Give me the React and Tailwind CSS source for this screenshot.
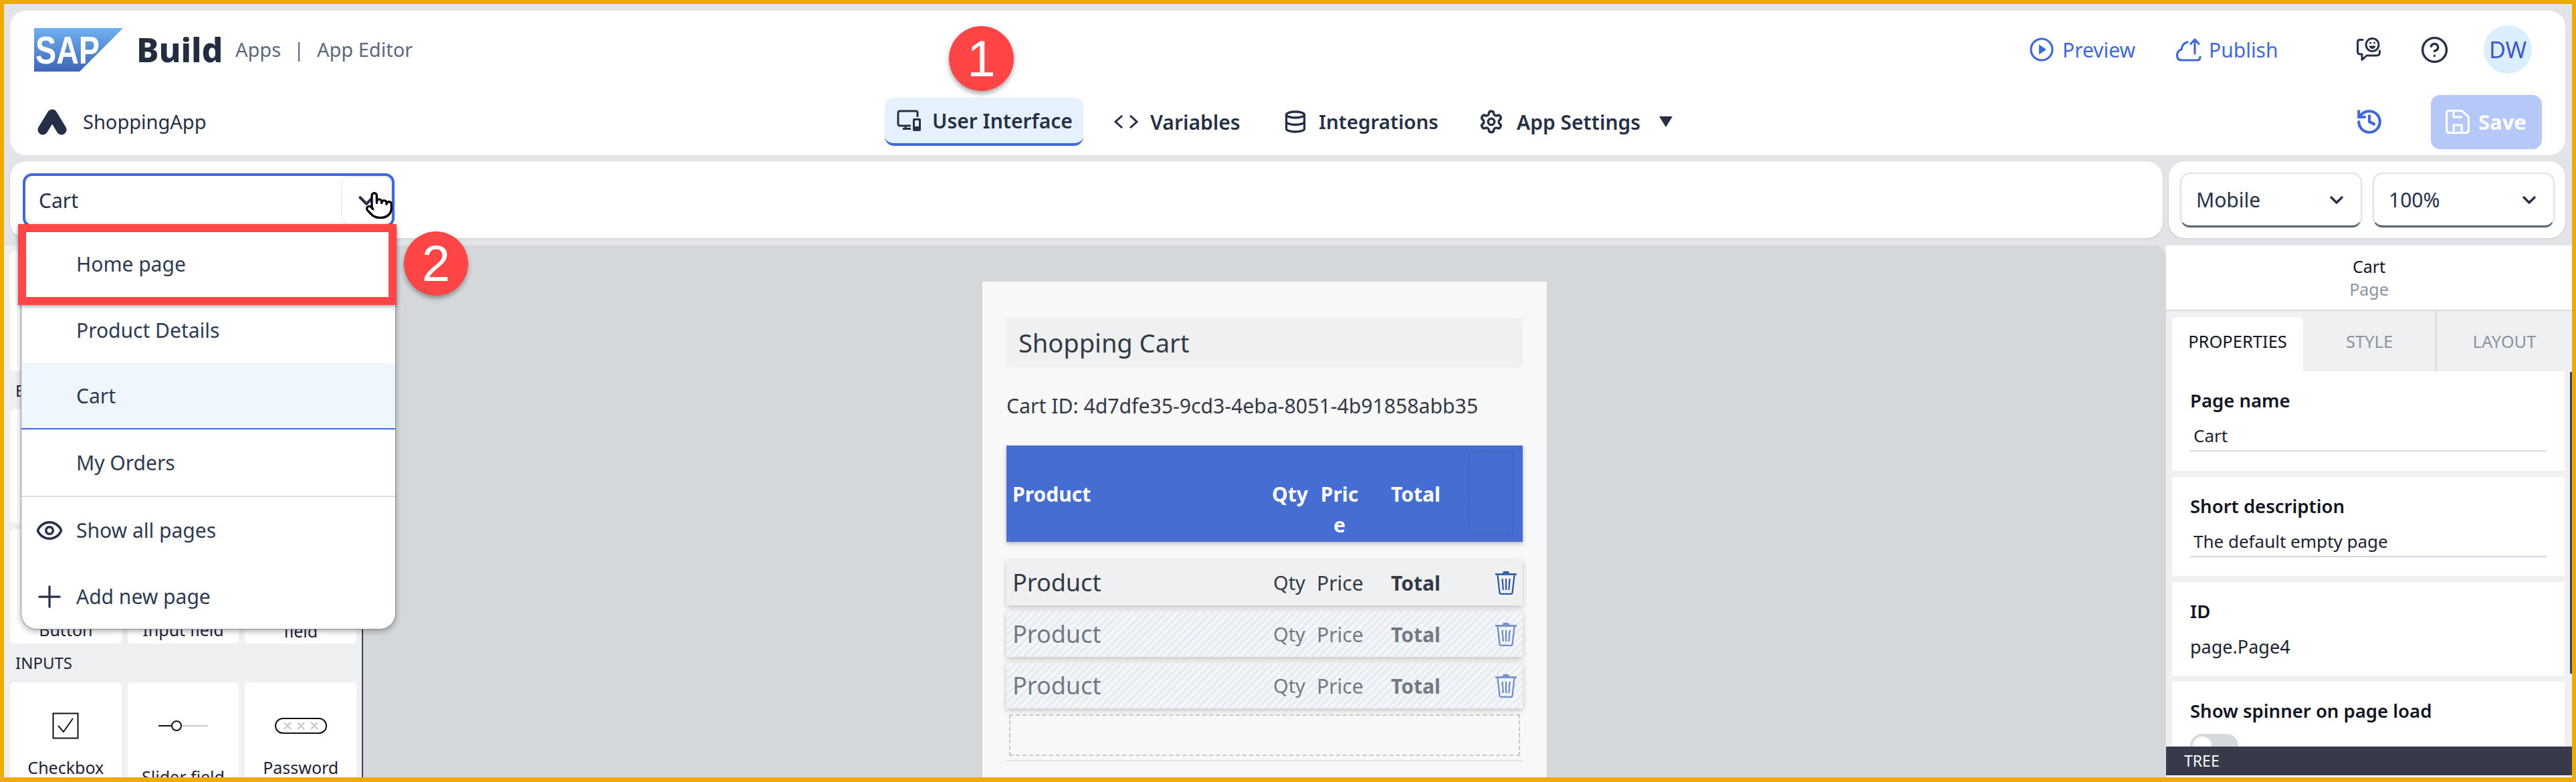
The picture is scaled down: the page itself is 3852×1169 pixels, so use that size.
import React from "react";
import { Database, Settings, History, CircleHelp, Eye, Plus, ChevronDown, Pointer } from "lucide-react";

function SapLogo() {
  return (
    <svg width="133" height="65" viewBox="0 0 133 65" className="shrink-0">
      <defs>
        <linearGradient id="sapg" x1="0" y1="0" x2="0" y2="1">
          <stop offset="0" stopColor="#6fb0ee" />
          <stop offset="1" stopColor="#3f66b8" />
        </linearGradient>
      </defs>
      <polygon points="0,0 133,0 68,65 0,65" fill="url(#sapg)" />
      <text x="2" y="53" fill="#ffffff" fontFamily="Liberation Sans" fontWeight="700" fontSize="57" textLength="96" lengthAdjust="spacingAndGlyphs">SAP</text>
    </svg>
  );
}

function FeedbackIcon() {
  return (
    <svg width="36" height="36" viewBox="0 0 36 36" fill="none" stroke="#253047" strokeWidth="3" className="shrink-0">
      <path d="M9 3.5H5Q1.5 3.5 1.5 7V21Q1.5 25 5 25H8V33.5L15 27H30Q34.5 27 34.5 22V20" strokeLinecap="round" strokeLinejoin="round" />
      <circle cx="23.5" cy="11" r="9.5" />
      <path d="M18.5 12.5h10q-1 4.5-5 4.5t-5-4.5z" fill="#253047" stroke="none" />
      <circle cx="20.5" cy="8" r="1.5" fill="#253047" stroke="none" />
      <circle cx="26.5" cy="8" r="1.5" fill="#253047" stroke="none" />
    </svg>
  );
}

function AppGlyph() {
  return (
    <svg width="44" height="39" viewBox="0 0 44 39" className="shrink-0">
      <path d="M8 31L22 8L36 31" fill="none" stroke="#253047" strokeWidth="15" strokeLinecap="round" strokeLinejoin="round" />
    </svg>
  );
}

function UiIcon() {
  return (
    <svg width="36" height="32" viewBox="0 0 36 32" fill="none" stroke="#253047" strokeWidth="3" className="shrink-0">
      <path d="M31 11V4.5Q31 2 28 2H5Q2 2 2 4.5V21Q2 24 5 24H21" />
      <path d="M13 24V28M9 28.5H21" />
      <rect x="24" y="13" width="12" height="19" rx="2" fill="#253047" stroke="none" />
      <rect x="27" y="16" width="6" height="9" fill="#e5f2fe" stroke="none" />
    </svg>
  );
}

function CodeIcon() {
  return (
    <svg width="36" height="20" viewBox="0 0 36 20" fill="none" stroke="#253047" strokeWidth="3" className="shrink-0">
      <path d="M12 1L2 10L12 19M24 1L34 10L24 19" />
    </svg>
  );
}

function PreviewIcon() {
  return (
    <svg width="36" height="36" viewBox="0 0 36 36" fill="none" className="shrink-0">
      <circle cx="18" cy="18" r="16" stroke="#3f68d8" strokeWidth="3.2" />
      <path d="M14 10.5L25 18L14 25.5Z" fill="#3f68d8" />
    </svg>
  );
}

function PublishIcon() {
  return (
    <svg width="38" height="36" viewBox="0 0 38 36" fill="none" stroke="#3f68d8" strokeWidth="3.2" strokeLinecap="round" strokeLinejoin="round" className="shrink-0">
      <path d="M17 7Q9 9 8 18Q1.5 20 1.5 27Q1.5 34 9 34H31Q36 34 36 29" />
      <path d="M28 24V3M22 9.5L28 3L34 9.5" />
    </svg>
  );
}

function SaveIcon() {
  return (
    <svg width="36" height="36" viewBox="0 0 36 36" fill="none" stroke="#ffffff" strokeWidth="3.2" strokeLinejoin="round" className="shrink-0">
      <path d="M5 1.5H24L34.5 11V30Q34.5 34.5 30 34.5H6Q1.5 34.5 1.5 30V5Q1.5 1.5 5 1.5Z" />
      <path d="M12 2V11H25M12 34V23H24V34" />
    </svg>
  );
}

function TrashIcon() {
  return (
    <svg width="32" height="36" viewBox="0 0 32 36" fill="none" stroke="#2a56a8" strokeWidth="2.2" className="shrink-0">
      <path d="M0 5.5H32" strokeWidth="2.6" />
      <path d="M11 4Q11 1 14 1H18Q21 1 21 4Z" fill="#2a56a8" stroke="none" />
      <path d="M3.5 7L6.5 33Q6.8 34.8 9 34.8H23Q25.2 34.8 25.5 33L28.5 7" />
      <path d="M10.5 12L11.8 29M16 12V29M21.5 12L20.2 29" />
    </svg>
  );
}

function WidgetCard({ label, icon, second }) {
  return (
    <div className="h-full rounded-[6px] bg-white flex flex-col items-center overflow-hidden">
      <div className="h-[110px] w-full flex items-center justify-center pt-[20px] shrink-0">{icon}</div>
      <div className={`text-[25px] leading-[34px] text-[#223] text-center ${second ? "mt-[14px]" : ""}`}>{label}</div>
    </div>
  );
}

function DropItem({ children, icon, active }) {
  return (
    <div className={`h-[99px] flex items-center shrink-0 ${active ? "bg-[#eff6fe] border-b-[2px] border-[#3f68d8]" : ""}`}>
      <div className="w-[82px] flex justify-center pl-[2px] shrink-0">{icon}</div>
      <span className="text-[30px] text-[#2c3a52]">{children}</span>
    </div>
  );
}

function Select({ children }) {
  return (
    <div className="w-[270px] h-[81px] rounded-[14px] bg-white border border-[#dde0e5] border-b-[3px] border-b-[#556677] shadow-[0_0_3px_rgba(60,70,90,0.35)] flex items-center pl-[22px] pr-[20px] justify-between">
      <span className="text-[30px] text-[#253047]">{children}</span>
      <ChevronDown size={32} strokeWidth={2.6} color="#253047" />
    </div>
  );
}

function Row({ hatched }) {
  const cls = hatched
    ? "bg-[repeating-linear-gradient(135deg,#e7edf3_0,#e7edf3_4px,#f4f6f9_4px,#f4f6f9_8px)]"
    : "bg-[#eff0f2]";
  return (
    <div className={`h-[68px] mb-[9px] flex items-center shadow-[0_3px_8px_rgba(0,0,0,0.22)] ${cls}`}>
      <div className={`flex items-center w-full ${hatched ? "opacity-65" : ""}`}>
        <span className="w-[390px] pl-[9px] text-[36px] text-[#333a45]">Product</span>
        <span className="w-[74px] pl-[9px] text-[29px] text-[#333a45]">Qty</span>
        <span className="w-[111px] text-[30px] text-[#333a45]">Price</span>
        <span className="w-[156px] text-[30px] font-bold text-[#333a45]">Total</span>
        <TrashIcon />
      </div>
    </div>
  );
}

function PropCard({ title, value, height, underline, children }) {
  return (
    <div className={`bg-white px-[27px] pt-[28px] mb-[9px] shrink-0 ${height}`}>
      <div className="text-[27.5px] font-semibold leading-[32px] text-[#0f1420]">{title}</div>
      {underline ? (
        <div className="mt-[20px] h-[40px] pl-[5px] border-b-[2px] border-[#d5d8dc] text-[26px] leading-[32px] text-[#1c2230]">{value}</div>
      ) : value ? (
        <div className="mt-[20px] text-[27px] leading-[34px] text-[#1c2230]">{value}</div>
      ) : null}
      {children}
    </div>
  );
}

export default function App() {
  return (
    <div className="relative w-[3852px] h-[1169px] overflow-hidden border-t-[6px] border-l-[6px] border-r-[6px] border-b-[7px] border-[#f0ab00] bg-[#e2e4e8] font-['Noto_Sans',sans-serif] flex flex-col">
      {/* Header */}
      <div className="mt-[10px] ml-[9px] mr-[10px] h-[216px] shrink-0 rounded-[24px] bg-white flex flex-col">
        <div className="h-[116px] shrink-0 flex items-center pl-[36px] pr-[50px]">
          <SapLogo />
          <span className="ml-[20px] w-[127px] text-[50px] leading-none font-extrabold text-[#222d40]">Build</span>
          <span className="ml-[21px] w-[69px] text-[29px] text-[#5b6880]">Apps</span>
          <span className="ml-[18px] text-[29px] text-[#5b6880]">|</span>
          <span className="ml-[19px] text-[29px] text-[#5b6880]">App Editor</span>
          <div className="ml-auto flex items-center">
            <PreviewIcon />
            <span className="ml-[13px] w-[109px] text-[30px] text-[#3f68d8]">Preview</span>
            <div className="ml-[61px]"><PublishIcon /></div>
            <span className="ml-[11px] w-[103px] text-[30px] text-[#3f68d8]">Publish</span>
            <div className="ml-[118px]"><FeedbackIcon /></div>
            <div className="ml-[59px]"><CircleHelp size={43} strokeWidth={1.9} color="#253047" /></div>
            <div className="ml-[52px] w-[72px] h-[72px] rounded-full bg-[#dbeefe] flex items-center justify-center text-[34px] text-[#3f58c8]">DW</div>
          </div>
        </div>
        <div className="h-[100px] shrink-0 flex items-center pl-[41px] pr-[35px]">
          <div className="w-[1267px] flex items-center shrink-0">
            <AppGlyph />
            <span className="ml-[24px] text-[29px] text-[#253047]">ShoppingApp</span>
          </div>
          <div className="w-[297px] h-[72px] shrink-0 rounded-[14px] bg-[#e5f2fe] border-b-[4px] border-[#3f68d8] flex items-center pl-[18px]">
            <UiIcon />
            <span className="ml-[17px] text-[30px] font-semibold text-[#253047] whitespace-nowrap">User Interface</span>
          </div>
          <div className="ml-[46px]"><CodeIcon /></div>
          <span className="ml-[18px] w-[136px] text-[30px] font-semibold text-[#253047]">Variables</span>
          <div className="ml-[63px]"><Database size={36} strokeWidth={2.2} color="#253047" /></div>
          <span className="ml-[17px] w-[177px] text-[29.5px] font-semibold text-[#253047]">Integrations</span>
          <div className="ml-[62px]"><Settings size={38} strokeWidth={2.2} color="#253047" /></div>
          <span className="ml-[19px] w-[189px] text-[30px] font-semibold text-[#253047] whitespace-nowrap">App Settings</span>
          <div className="ml-[24px] w-0 h-0 border-l-[10px] border-r-[10px] border-t-[16px] border-l-transparent border-r-transparent border-t-[#253047]"></div>
          <div className="ml-auto flex items-center">
            <History size={42} strokeWidth={2.4} color="#3f68d8" />
            <div className="ml-[71px] w-[166px] h-[81px] rounded-[14px] bg-[#b5c8f7] flex items-center pl-[22px]">
              <SaveIcon />
              <span className="ml-[13px] text-[31px] font-bold text-white">Save</span>
            </div>
          </div>
        </div>
      </div>

      {/* Toolbar */}
      <div className="mt-[9px] ml-[9px] mr-[10px] h-[115px] shrink-0 flex gap-[9px]">
        <div className="flex-1 rounded-[24px] bg-white shadow-[0_1px_3px_rgba(0,0,0,0.12)] pt-[18px] pl-[19px]">
          <div className="relative w-[556px] h-[81px] rounded-[14px] bg-white border-[4px] border-[#3f68d8] flex items-center pl-[20px]">
            <span className="text-[30px] text-[#253047]">Cart</span>
            <div className="absolute right-0 top-0 bottom-0 w-[76px] rounded-[12px] border border-[#dce6fb] flex items-center justify-center">
              <ChevronDown size={38} strokeWidth={2.6} color="#253047" />
            </div>
            <Pointer size={44} strokeWidth={1.8} color="#000000" fill="#ffffff" className="absolute left-[507px] top-[22px]" />
          </div>
        </div>
        <div className="w-[593px] shrink-0 rounded-[24px] bg-white shadow-[0_1px_3px_rgba(0,0,0,0.12)] pt-[18px] pl-[18px] flex gap-[18px]">
          <Select>Mobile</Select>
          <Select>100%</Select>
        </div>
      </div>

      {/* Workspace */}
      <div className="mt-[11px] flex-1 min-h-0 flex">
        <div className="w-[537px] shrink-0 bg-[#eef0f2] border-r-[2px] border-[#3a4050] pl-[9px] pt-[8px] overflow-hidden">
          <div className="h-[180px] w-[518px] rounded-[6px] bg-white"></div>
          <div className="h-[57px] flex items-center pl-[8px] text-[24px] text-[#223]">ESSENTIALS</div>
          <div className="grid grid-cols-3 gap-[9px] w-[518px] h-[170px]">
            <div className="rounded-[6px] bg-white"></div>
            <div className="rounded-[6px] bg-white"></div>
            <div className="rounded-[6px] bg-white"></div>
          </div>
          <div className="grid grid-cols-3 gap-[9px] w-[518px] h-[171px] mt-[9px]">
            <div className="rounded-[6px] bg-white flex flex-col justify-end items-center text-[25px] text-[#223] pb-[2px]">Button</div>
            <div className="rounded-[6px] bg-white flex flex-col justify-end items-center text-[25px] text-[#223] pb-[2px]">Input field</div>
            <div className="rounded-[6px] bg-white flex flex-col justify-end items-center text-[25px] text-[#223]">field</div>
          </div>
          <div className="h-[58px] flex items-center pl-[8px] text-[24px] text-[#223]">INPUTS</div>
          <div className="grid grid-cols-3 gap-[9px] w-[518px] h-[180px]">
            <WidgetCard
              label="Checkbox"
              icon={
                <svg width="40" height="40" viewBox="0 0 40 40" fill="none" stroke="#111" strokeWidth="2">
                  <rect x="1.5" y="1.5" width="37" height="37" />
                  <path d="M9 20l8 9L31 9" />
                </svg>
              }
            />
            <WidgetCard
              second
              label="Slider field"
              icon={
                <svg width="74" height="22" viewBox="0 0 74 22" fill="none">
                  <path d="M0 11H20" stroke="#111" strokeWidth="2" />
                  <path d="M34 11H74" stroke="#c8c8c8" strokeWidth="2" />
                  <circle cx="27" cy="11" r="7" stroke="#111" strokeWidth="2" fill="#fff" />
                </svg>
              }
            />
            <WidgetCard
              label="Password"
              icon={
                <svg width="78" height="26" viewBox="0 0 78 26" fill="none">
                  <rect x="1" y="2" width="76" height="22" rx="11" stroke="#111" strokeWidth="2" />
                  <path d="M14 8l10 10M24 8L14 18M34 8l10 10M44 8L34 18M54 8l10 10M64 8L54 18" stroke="#c4c4c4" strokeWidth="2" />
                </svg>
              }
            />
          </div>
        </div>

        <div className="flex-1 min-w-0 bg-[#d5d8db] rounded-tr-[18px] flex justify-center pt-[54px] overflow-hidden">
          <div className="w-[844px] bg-[#f8f8f8] px-[36px] pt-[54px] shrink-0 h-[800px]">
            <div className="h-[74px] bg-[#eff0f2] flex items-center pl-[18px] text-[38px] text-[#333a45]">Shopping Cart</div>
            <div className="mt-[38px] h-[40px] flex items-center text-[30.2px] text-[#333a45] whitespace-nowrap">Cart ID: 4d7dfe35-9cd3-4eba-8051-4b91858abb35</div>
            <div className="mt-[39px] h-[144px] bg-[#466ed2] shadow-[0_3px_6px_rgba(0,0,0,0.25)] flex items-start pt-[50px] text-white font-bold text-[30px] leading-[46px]">
              <span className="w-[397px] pl-[9px]">Product</span>
              <span className="w-[72px]">Qty</span>
              <span className="w-[60px] text-center break-all -ml-[1px]">Price</span>
              <span className="ml-[47px] w-[117px]">Total</span>
              <div className="w-[66px] h-[125px] -mt-[41px] border border-dashed border-[#3a5cb0]"></div>
            </div>
            <div className="mt-[27px]">
              <Row />
              <Row hatched />
              <Row hatched />
            </div>
            <div className="mx-[4px] mt-[5px] h-[62px] border-[2px] border-dashed border-[#c8c9cc]"></div>
            <div className="mt-[6px] h-[2px] bg-[#e3e4e6]"></div>
          </div>
        </div>

        <div className="relative w-[607px] shrink-0 bg-[#eef0f2] flex flex-col overflow-hidden">
          <div className="h-[98px] shrink-0 bg-white border-b-[2px] border-[#d8dbe0] flex flex-col items-center justify-center">
            <div className="text-[25px] leading-[34px] text-[#0f1420]">Cart</div>
            <div className="text-[25px] leading-[34px] text-[#8a93a3]">Page</div>
          </div>
          <div className="h-[90px] shrink-0 flex items-end pl-[9px]">
            <div className="w-[196px] h-[81px] pb-[8px] rounded-t-[8px] bg-white flex items-center justify-center text-[25.5px] text-[#0f1420]">PROPERTIES</div>
            <div className="w-[198px] h-[81px] pb-[8px] flex items-center justify-center text-[25.5px] text-[#8a93a3]">STYLE</div>
            <div className="w-[204px] h-[90px] pt-[1px] border-l-[2px] border-[#d8dbe0] flex items-center justify-center text-[25.5px] text-[#8a93a3]">LAYOUT</div>
          </div>
          <div className="ml-[9px] w-[587px]">
            <PropCard title="Page name" value="Cart" underline height="h-[149px]" />
            <PropCard title="Short description" value="The default empty page" underline height="h-[148px]" />
            <PropCard title="ID" value="page.Page4" height="h-[140px]" />
            <PropCard title="Show spinner on page load" height="h-[139px]">
              <div className="mt-[18px] w-[72px] h-[36px] rounded-full bg-[#d5d8dc] p-[4px]">
                <div className="w-[28px] h-[28px] rounded-full bg-white"></div>
              </div>
            </PropCard>
          </div>
          <div className="absolute right-0 top-[189px] w-[3px] h-[451px] bg-[#3a4050]"></div>
          <div className="absolute left-0 right-0 top-[749px] h-[43px] bg-[#363a4a] flex items-center pl-[27px] text-[23px] text-white">TREE</div>
          <div className="absolute left-0 right-0 top-[792px] bottom-0 bg-white"></div>
        </div>
      </div>

      {/* Page dropdown */}
      <div className="absolute left-[25px] top-[334px] w-[561px] h-[601px] bg-white border border-[#8a93a3] rounded-b-[24px] shadow-[0_3px_8px_rgba(0,0,0,0.3)] flex flex-col pt-[4px] overflow-hidden">
        <DropItem>Home page</DropItem>
        <DropItem>Product Details</DropItem>
        <DropItem active>Cart</DropItem>
        <DropItem>My Orders</DropItem>
        <div className="h-[2px] bg-[#dcdee2] shrink-0"></div>
        <DropItem icon={<Eye size={42} strokeWidth={2} color="#253047" />}>Show all pages</DropItem>
        <DropItem icon={<Plus size={52} strokeWidth={1.5} color="#253047" />}>Add new page</DropItem>
      </div>

      {/* Callouts */}
      <div className="absolute left-[21px] top-[329px] w-[566px] h-[121px] border-[12px] border-[#ff4545] shadow-[0_2px_6px_rgba(0,0,0,0.35)]"></div>
      <div className="absolute left-[598px] top-[340px] w-[96px] h-[96px] rounded-full bg-[#ff4545] shadow-[0_4px_7px_rgba(0,0,0,0.35)] flex items-center justify-center text-white text-[76px] font-['Liberation_Sans',sans-serif]">2</div>
      <div className="absolute left-[1413px] top-[33px] w-[97px] h-[97px] rounded-full bg-[#ff4545] shadow-[0_4px_7px_rgba(0,0,0,0.35)] flex items-center justify-center text-white text-[76px] font-['Liberation_Sans',sans-serif]">1</div>
    </div>
  );
}
